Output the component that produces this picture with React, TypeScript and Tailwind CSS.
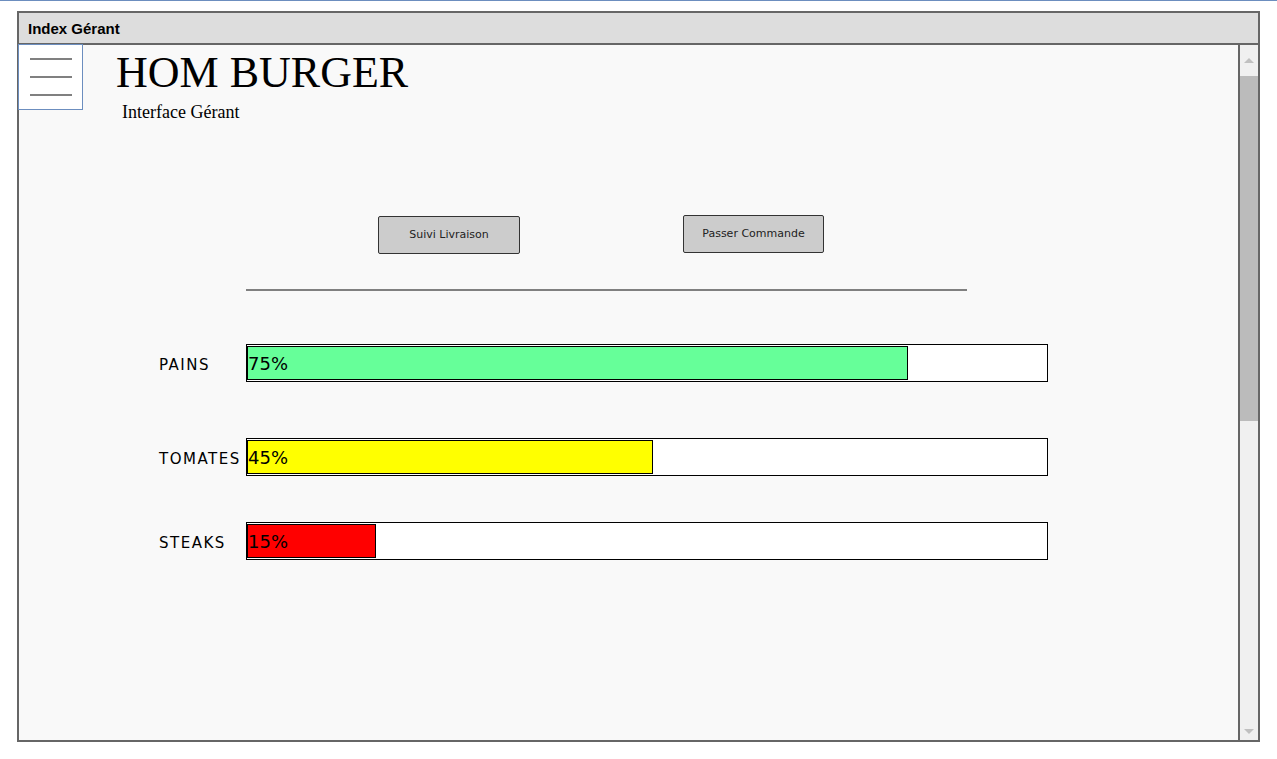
import React from "react";

const sketch = { fontFamily: '"Comic Sans MS", "DejaVu Sans", sans-serif' };

const stocks = [
  { name: "PAINS", pct: "75%", fill: 661, color: "bg-[#66ff99]", mt: "mt-[53px]" },
  { name: "TOMATES", pct: "45%", fill: 406, color: "bg-[#ffff00]", mt: "mt-[56px]" },
  { name: "STEAKS", pct: "15%", fill: 129, color: "bg-[#ff0000]", mt: "mt-[46px]" },
];

const App = () => {
  return (
    <div className="w-[1277px] h-[759px] bg-white overflow-hidden">
      <div className="h-px bg-[#6c8ebf]" />
      {/* window */}
      <div className="mt-[10px] ml-[17px] w-[1243px] h-[731px] border-2 border-[#666] flex flex-col">
        <div
          className="h-[32px] shrink-0 bg-[#dddddd] border-b-2 border-[#666] flex items-center pl-[9px] pt-[2px] text-[15px] font-bold text-black"
          style={{ fontFamily: '"Liberation Sans", Arial, sans-serif' }}
        >
          Index Gérant
        </div>
        <div className="flex flex-1 min-h-0">
          {/* main content */}
          <div className="flex-1 bg-[#f9f9f9] relative">
            <div className="flex">
              <div className="w-[65px] h-[66px] -ml-px -mt-px border border-[#6c8ebf] bg-white flex flex-col items-center justify-center gap-[16px]">
                <div className="w-[42px] h-[2px] bg-[#808080]" />
                <div className="w-[42px] h-[2px] bg-[#808080]" />
                <div className="w-[42px] h-[2px] bg-[#808080]" />
              </div>
              <div
                className="ml-[33px] text-black"
                style={{ fontFamily: '"Liberation Serif", "Times New Roman", serif' }}
              >
                <div className="text-[44px] leading-[45px] mt-[5px]">HOM BURGER</div>
                <div className="text-[18px] leading-[20px] mt-[7px] ml-[6px]">Interface Gérant</div>
              </div>
            </div>

            {/* buttons */}
            <div className="flex pl-[359px] mt-[93px] items-start text-[11px] text-[#222]" style={sketch}>
              <button className="w-[142px] h-[38px] bg-[#cccccc] border border-[#333] rounded-[2px] mt-px">
                Suivi Livraison
              </button>
              <button className="w-[141px] h-[38px] ml-[163px] bg-[#cccccc] border border-[#333] rounded-[2px]">
                Passer Commande
              </button>
            </div>

            <div className="ml-[227px] mt-[35px] w-[721px] h-[2px] bg-[#808080]" />

            {/* stock bars */}
            {stocks.map((s) => (
              <div key={s.name} className={`flex items-center pl-[140px] ${s.mt}`}>
                <div className="w-[87px] pt-[4px] text-[15px] tracking-[1.5px] text-black" style={sketch}>
                  {s.name}
                </div>
                <div className="w-[802px] h-[38px] border border-black bg-white">
                  <div
                    className={`h-[34px] mt-px border border-black ${s.color} flex items-center text-[18px] text-black`}
                    style={{ width: s.fill, ...sketch }}
                  >
                    {s.pct}
                  </div>
                </div>
              </div>
            ))}
          </div>

          {/* scrollbar */}
          <div className="w-[20px] shrink-0 border-l-2 border-[#666] bg-[#f0f0f0] flex flex-col items-center">
            <div className="h-[31px] flex items-center justify-center">
              <div className="w-0 h-0 border-l-[5px] border-r-[5px] border-b-[5px] border-l-transparent border-r-transparent border-b-[#c0c0c0]" />
            </div>
            <div className="w-full h-[345px] bg-[#bbbbbb]" />
            <div className="flex-1" />
            <div className="h-[18px] flex items-center justify-center">
              <div className="w-0 h-0 border-l-[5px] border-r-[5px] border-t-[5px] border-l-transparent border-r-transparent border-t-[#c0c0c0]" />
            </div>
          </div>
        </div>
      </div>
    </div>
  );
};

export default App;
